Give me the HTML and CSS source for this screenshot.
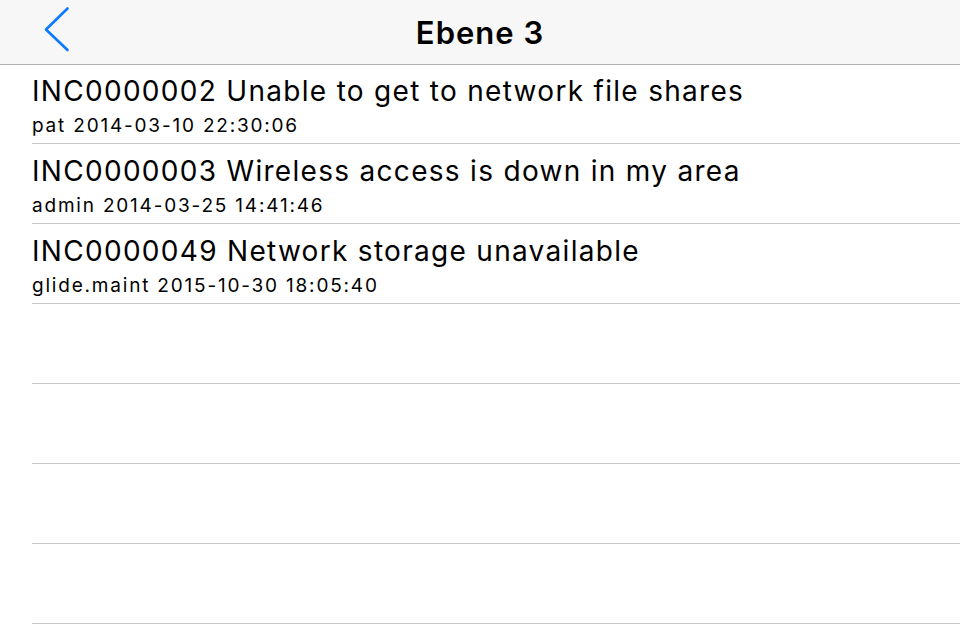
FILE: index.html
```html
<!DOCTYPE html>
<html>
<head>
<meta charset="utf-8">
<link rel="stylesheet" href="styles.css">
</head>
<body>
<header class="navbar">
  <button class="back" aria-label="Back">
    <svg width="30" height="48" viewBox="0 0 30 48"><polyline points="23.5,4.5 2,25.5 23.5,46" fill="none" stroke="#0a7aff" stroke-width="2.6" stroke-linecap="round" stroke-linejoin="round"/></svg>
  </button>
  <h1 class="title">Ebene 3</h1>
</header>
<ul class="list">
  <li class="row"><div class="row-title">INC0000002 Unable to get to network file shares</div><div class="row-sub">pat 2014-03-10 22:30:06</div></li>
  <li class="row"><div class="row-title">INC0000003 Wireless access is down in my area</div><div class="row-sub">admin 2014-03-25 14:41:46</div></li>
  <li class="row"><div class="row-title">INC0000049 Network storage unavailable</div><div class="row-sub">glide.maint 2015-10-30 18:05:40</div></li>
  <li class="row"></li>
  <li class="row"></li>
  <li class="row"></li>
  <li class="row"></li>
</ul>
</body>
</html>
```
FILE: styles.css
```css
html, body {
  margin: 0;
  padding: 0;
  background: #ffffff;
  font-family: Inter, "Liberation Sans", Arial, sans-serif;
  color: #000;
  overflow: hidden;
}
.navbar {
  height: 64px;
  background: #f7f7f7;
  border-bottom: 1px solid #b2b2b2;
  display: flex;
  align-items: center;
  justify-content: center;
  position: relative;
}
.back {
  position: absolute;
  left: 44px;
  top: 4px;
  padding: 0;
  border: 0;
  background: none;
  width: 30px;
  height: 48px;
}
.back svg { display: block; }
.title {
  margin: 0;
  font-size: 31px;
  font-weight: 600;
  letter-spacing: 1px;
}
.list {
  list-style: none;
  margin: -1px 0 0 32px;
  padding: 0;
}
.row {
  height: 79px;
  border-bottom: 1px solid #c8c7cc;
  box-sizing: content-box;
  padding: 0;
}
.row-title {
  font-size: 28px;
  line-height: 32px;
  padding-top: 11px;
  letter-spacing: 1.3px;
  white-space: nowrap;
}
.row-sub {
  font-size: 19px;
  line-height: 22px;
  margin-top: 8px;
  letter-spacing: 1.8px;
  white-space: nowrap;
}
```
